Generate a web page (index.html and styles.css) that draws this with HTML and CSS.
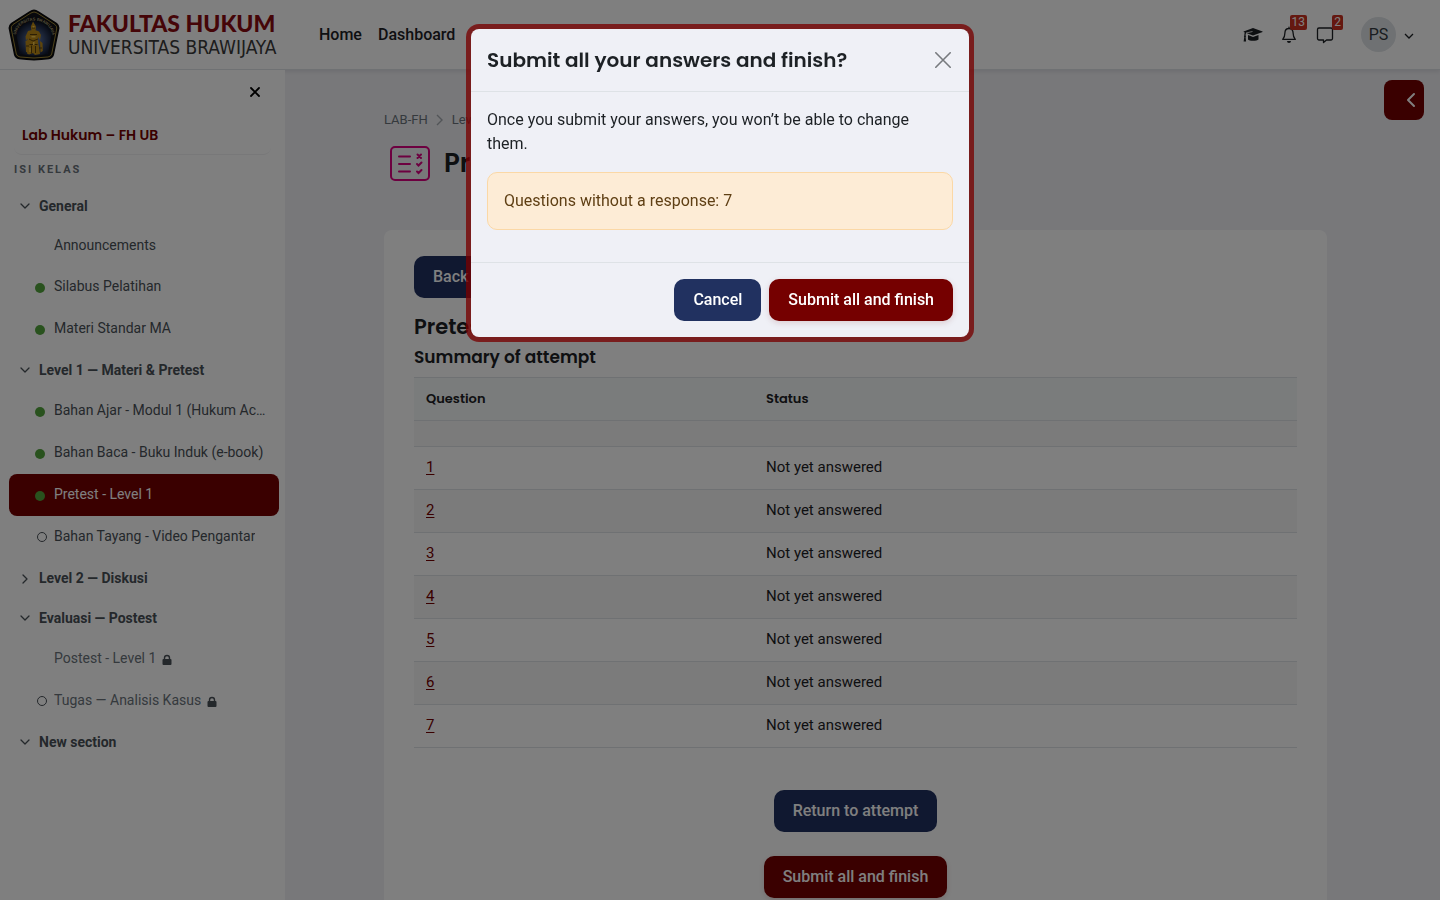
FILE: index.html
```html
<!DOCTYPE html>
<html lang="en">

<head>
  <meta charset="UTF-8" />
  <meta name="viewport" content="width=device-width, initial-scale=1" />
  <title>Pretest - Level 1: Summary of attempt</title>
  <link rel="stylesheet" href="styles.css">
</head>

<body>
  <!-- icons used more than once -->
  <svg class="sprite" aria-hidden="true">
    <symbol id="chevron-down" viewBox="0 0 12 12">
      <path d="M2 4l4 4 4-4" fill="none" stroke="currentColor" stroke-width="1.3" stroke-linecap="round" stroke-linejoin="round" />
    </symbol>
    <symbol id="chevron-right" viewBox="0 0 12 12">
      <path d="M4 3l4 4-4 4" fill="none" stroke="currentColor" stroke-width="1.3" stroke-linecap="round" stroke-linejoin="round" />
    </symbol>
    <symbol id="lock" viewBox="0 0 10 12">
      <path d="M1.800 5V4a3.200 3.200 0 0 1 6.400 0v1h.3a1 1 0 0 1 1 1v4a1 1 0 0 1-1 1h-7a1 1 0 0 1-1-1V6a1 1 0 0 1 1-1zm1.400 0h3.600V4a1.800 1.800 0 0 0-3.600 0z" fill="currentColor" />
    </symbol>
  </svg>

  <header class="navbar">
    <a class="brand" href="#">
      <svg class="emblem" viewBox="0 0 52 52" aria-hidden="true">
        <defs>
          <radialGradient id="glow" cx="50%" cy="55%" r="52%">
            <stop offset="0" stop-color="#6a88c4" />
            <stop offset="1" stop-color="#10182c" />
          </radialGradient>
        </defs>
        <path d="M26 .5Q28 .5 31 2.500L49 14Q52 16.500 51.300 20L46 46Q45 49.500 41 50.300Q26 52.500 11 50.300Q7 49.500 6 46L.7 20Q0 16.500 3 14L21 2.500Q24 .5 26 .5z" fill="#0a0a0c" />
        <path d="M26 3Q28 3.300 30 4.500L47 15.500Q49.300 17.500 48.700 20L43.700 45Q43 47.500 40 48Q26 50 12 48Q9 47.500 8.300 45L3.300 20Q2.700 17.500 5 15.500L22 4.500Q24 3.300 26 3z" fill="#101318" stroke="#b0953a" stroke-width=".9" />
        <path d="M26 12Q37 13 44 23L40 45Q26 48.500 12 45L8 23Q15 13 26 12z" fill="url(#glow)" />
        <path id="arc" d="M7.500 27Q10 12.500 26 11.500Q42 12.500 44.500 27" fill="none" />
        <text class="emblem-text"><textPath href="#arc" startOffset="1">UNIVERSITAS BRAWIJAYA</textPath></text>
        <g fill="#bd8a16">
          <path d="M25 12.500l1.500 2.500 1.500 2.500-.5 4h-4l-.7-4 1.200-2.500z" />
          <path d="M20 22l4-1h3l4 1.500 2 3.500-1 5-2-3v5l1 5 1 7-5 1-2-2-4 1.500-2-1 1-8-.500-7-1.500 2-.500-4z" />
          <path d="M17.500 32l2.500-1 .5 3-.5 9.500-2-.5zM32 32l2.500 2 .3 8-2.300 1.500z" />
        </g>
        <path d="M22 25.500h7M21 30l4 2 5-2M21.500 35.500h8M23.500 36.500v8M27.500 37v7M18 37h3M31 39h3M24 19h3" fill="none" stroke="#4d360a" stroke-width=".9" />
        <path d="M24.500 17h2v1.500h-2zM23.500 27h4v1.500h-4zM25 33h1.500v3H25zM21.500 39h1v4h-1z" fill="#f0c550" />
      </svg>
      <span class="brand-text">
        <span class="brand-faculty">FAKULTAS HUKUM</span>
        <span class="brand-univ">UNIVERSITAS BRAWIJAYA</span>
      </span>
    </a>
    <nav class="main-nav" aria-label="Main">
      <a href="#">Home</a>
      <a href="#">Dashboard</a>
    </nav>
    <div class="user-tools">
      <button class="tool" type="button" aria-label="Courses">
        <svg width="20" height="16" viewBox="0 0 20 16" aria-hidden="true">
          <path d="M10 1L.6 4.500v.6l1.200.5C1.300 6.500 1.300 7.500 1.400 8.500.8 8.800.8 9.700 1.300 10L.6 14.500h2.500L2.600 10c.5-.3.500-1.200 0-1.500 0-1 .1-1.800.6-2.400L10 8.600l9.600-3.500v-.6zM5 8v4.500c1 1.700 9 1.700 10.500 0V8L10 10z" fill="currentColor" />
          <path d="M3 6l6.500-1.500" stroke="#fff" stroke-width=".8" />
        </svg>
      </button>
      <button class="tool" type="button" aria-label="Notifications">
        <svg width="16" height="18" viewBox="0 0 16 18" aria-hidden="true">
          <path d="M8 2.500C5.300 2.500 3.900 4.500 3.900 7c0 3.300-.7 4.800-2.200 6.400h12.600C12.800 11.800 12.100 10.300 12.100 7c0-2.500-1.400-4.500-4.100-4.500zM8 1.200v1.300" fill="none" stroke="currentColor" stroke-width="1.300" stroke-linejoin="round" stroke-linecap="round" />
          <path d="M6 15h4a2 2 0 0 1-4 0z" fill="currentColor" />
        </svg>
        <span class="badge">13</span>
      </button>
      <button class="tool" type="button" aria-label="Messages">
        <svg width="18" height="18" viewBox="0 0 18 18" aria-hidden="true">
          <path d="M3 2h12a1.500 1.500 0 0 1 1.500 1.500v9A1.500 1.500 0 0 1 15 14h-4.500L7.500 16.500V14H3a1.500 1.500 0 0 1-1.500-1.500v-9A1.500 1.500 0 0 1 3 2z" fill="none" stroke="currentColor" stroke-width="1.300" stroke-linejoin="round" />
        </svg>
        <span class="badge">2</span>
      </button>
      <button class="user-menu" type="button" aria-label="User menu">
        <span class="avatar">PS</span>
        <svg width="12" height="12" viewBox="0 0 12 12" aria-hidden="true"><path d="M2 5l4 4 4-4" fill="none" stroke="currentColor" stroke-width="1.300" /></svg>
      </button>
    </div>
  </header>

  <div class="page">
    <aside class="drawer">
      <div class="drawer-head">
        <button class="drawer-close" type="button" aria-label="Close course index">
          <svg width="12" height="12" viewBox="0 0 12 12" aria-hidden="true">
            <path d="M2 2l8 8M10 2l-8 8" stroke="currentColor" stroke-width="1.800" stroke-linecap="round" />
          </svg>
        </button>
      </div>
      <a class="course-name" href="#">Lab Hukum – FH UB</a>
      <p class="drawer-label">ISI KELAS</p>
      <nav class="index" aria-label="Course index">
        <div class="section"><button type="button" aria-label="Toggle General"><svg width="12" height="12"><use href="#chevron-down" /></svg></button><a href="#">General</a></div>
        <ul>
          <li class="plain"><a href="#"><span class="dot"></span><span class="name">Announcements</span></a></li>
          <li><a href="#"><span class="dot done"></span><span class="name">Silabus Pelatihan</span></a></li>
          <li><a href="#"><span class="dot done"></span><span class="name">Materi Standar MA</span></a></li>
        </ul>
        <div class="section"><button type="button" aria-label="Toggle Level 1"><svg width="12" height="12"><use href="#chevron-down" /></svg></button><a href="#">Level 1 — Materi &amp; Pretest</a></div>
        <ul>
          <li><a href="#"><span class="dot done"></span><span class="name">Bahan Ajar - Modul 1 (Hukum Acara)</span></a></li>
          <li><a href="#"><span class="dot done"></span><span class="name">Bahan Baca - Buku Induk (e-book)</span></a></li>
          <li class="current"><a href="#"><span class="dot done"></span><span class="name">Pretest - Level 1</span></a></li>
          <li><a href="#"><span class="dot todo"></span><span class="name">Bahan Tayang - Video Pengantar</span></a></li>
        </ul>
        <div class="section"><button type="button" aria-label="Toggle Level 2"><svg width="12" height="12"><use href="#chevron-right" /></svg></button><a href="#">Level 2 — Diskusi</a></div>
        <div class="section"><button type="button" aria-label="Toggle Evaluasi"><svg width="12" height="12"><use href="#chevron-down" /></svg></button><a href="#">Evaluasi — Postest</a></div>
        <ul>
          <li class="locked"><a href="#"><span class="dot"></span><span class="name">Postest - Level 1</span><svg width="10" height="12"><use href="#lock" /></svg></a></li>
          <li class="locked"><a href="#"><span class="dot todo"></span><span class="name">Tugas — Analisis Kasus</span><svg width="10" height="12"><use href="#lock" /></svg></a></li>
        </ul>
        <div class="section"><button type="button" aria-label="Toggle New section"><svg width="12" height="12"><use href="#chevron-down" /></svg></button><a href="#">New section</a></div>
      </nav>
    </aside>

    <main class="content">
      <nav class="breadcrumb" aria-label="Breadcrumb">
        <a href="#">LAB-FH</a>
        <svg width="8" height="12" viewBox="0 0 8 12" aria-hidden="true"><path d="M1 1l5 5-5 5" fill="none" stroke="#a5abb1" stroke-width="1.400" /></svg>
        <a href="#">Level 1</a>
      </nav>
      <div class="page-title">
        <svg width="40" height="36" viewBox="0 0 40 36" aria-hidden="true">
          <g fill="none" stroke="#da0080" stroke-width="2" stroke-linecap="round">
            <rect x="1" y="2" width="38" height="33" rx="4" />
            <path d="M9 11.500h11M9 19h11M9 26.500h11" />
            <path d="M27.500 9.500l3.500 3.500M31 9.500L27.500 13M27 19l1.500 1.500 3-3M27 26.500l1.500 1.500 3-3" />
          </g>
        </svg>
        <h1>Pretest - Level 1</h1>
      </div>

      <section class="card">
        <button class="btn btn-navy" type="button">Back</button>
        <h2>Pretest - Level 1</h2>
        <h3>Summary of attempt</h3>
        <table class="summary">
          <thead>
            <tr><th scope="col">Question</th><th scope="col">Status</th></tr>
          </thead>
          <tbody>
            <tr class="blank"><td colspan="2"></td></tr>
            <tr><td><a href="#">1</a></td><td>Not yet answered</td></tr>
            <tr><td><a href="#">2</a></td><td>Not yet answered</td></tr>
            <tr><td><a href="#">3</a></td><td>Not yet answered</td></tr>
            <tr><td><a href="#">4</a></td><td>Not yet answered</td></tr>
            <tr><td><a href="#">5</a></td><td>Not yet answered</td></tr>
            <tr><td><a href="#">6</a></td><td>Not yet answered</td></tr>
            <tr><td><a href="#">7</a></td><td>Not yet answered</td></tr>
          </tbody>
        </table>
        <div class="controls">
          <button class="btn btn-navy" type="button">Return to attempt</button>
          <button class="btn btn-red" type="button">Submit all and finish</button>
        </div>
      </section>
    </main>

    <button class="blocks-toggle" type="button" aria-label="Open block drawer">
      <svg width="10" height="16" viewBox="0 0 10 16" aria-hidden="true"><path d="M8 2L2 8l6 6" fill="none" stroke="currentColor" stroke-width="2" stroke-linecap="round" stroke-linejoin="round" /></svg>
    </button>
  </div>

  <div class="backdrop">
    <div class="modal" role="dialog" aria-modal="true" aria-labelledby="modal-title">
      <div class="modal-header">
        <h5 id="modal-title">Submit all your answers and finish?</h5>
        <button class="modal-close" type="button" aria-label="Close">
          <svg width="16" height="16" viewBox="0 0 16 16" aria-hidden="true"><path d="M.8.8l14.400 14.400M15.200.8L.8 15.200" stroke="currentColor" stroke-width="1.600" stroke-linecap="round" /></svg>
        </button>
      </div>
      <div class="modal-body">
        <p>Once you submit your answers, you won’t be able to change them.</p>
        <div class="alert">Questions without a response: 7</div>
      </div>
      <div class="modal-footer">
        <button class="btn btn-navy" type="button">Cancel</button>
        <button class="btn btn-red" type="button">Submit all and finish</button>
      </div>
    </div>
  </div>
</body>

</html>
```
FILE: styles.css
```css
* {
  box-sizing: border-box;
}

html,
body {
  height: 100%;
}

body {
  margin: 0;
  overflow: hidden;
  background: #f0f0f5;
  color: #1d2125;
  font-family: Roboto, "Noto Sans", sans-serif;
  font-size: 16px;
  line-height: 24px;
}

h1, h2, h3, h5, p, ul {
  margin: 0;
  padding: 0;
}

h1, h2, h3, h5, th, .course-name {
  font-family: Poppins, Inter, sans-serif;
  font-weight: 600;
}

a {
  color: inherit;
  text-decoration: none;
}

button {
  border: 0;
  padding: 0;
  background: none;
  color: inherit;
  font: inherit;
  cursor: pointer;
}

svg {
  display: block;
  flex: none;
}

.sprite {
  display: none;
}

/* navbar */
.navbar {
  display: flex;
  align-items: center;
  height: 70px;
  padding: 0 25px 0 8px;
  background: #fff;
  border-bottom: 1px solid #dee2e6;
  box-shadow: 0 2px 4px rgba(0, 0, 0, 0.08);
  position: relative;
}

.brand {
  display: flex;
  align-items: center;
  gap: 8px;
  width: 271px;
  white-space: nowrap;
}

.emblem {
  width: 52px;
  height: 52px;
}

.emblem-text {
  font-family: "Liberation Sans", sans-serif;
  font-size: 4px;
  font-weight: bold;
  fill: #a89c70;
}

.brand-text {
  display: flex;
  flex-direction: column;
}

.brand-faculty {
  color: #8b0a10;
  font-family: Lato, sans-serif;
  font-size: 23px;
  font-weight: 900;
  line-height: 24px;
}

.brand-univ {
  color: #3a3a3a;
  font-family: "Liberation Sans Narrow", "DejaVu Sans Condensed", sans-serif;
  font-size: 19px;
  line-height: 24px;
}

.main-nav {
  display: flex;
  gap: 16px;
  margin-left: 40px;
  font-weight: 500;
}

.user-tools {
  display: flex;
  align-items: center;
  gap: 16px;
  margin-left: auto;
}

.tool {
  position: relative;
  display: grid;
  place-items: center;
  width: 20px;
  height: 36px;
}

.badge {
  position: absolute;
  right: -8px;
  top: -2px;
  padding: 0 2px;
  border-radius: 2px;
  background: #ca3120;
  color: #fff;
  font-size: 12px;
  line-height: 15px;
}

.user-menu {
  display: flex;
  align-items: center;
  gap: 7px;
  margin-left: 10px;
}

.avatar {
  display: grid;
  place-items: center;
  width: 35px;
  height: 35px;
  border-radius: 50%;
  background: #dee2e6;
  color: #343a40;
}

/* page */
.page {
  display: flex;
  position: relative;
  height: calc(100% - 70px);
}

.drawer {
  flex: none;
  width: 285px;
  padding: 0 6px 0 9px;
  background: #fff;
  color: #495057;
  font-size: 14px;
}

.drawer-head {
  display: flex;
  justify-content: flex-end;
  height: 44px;
  padding-right: 18px;
}

.drawer-close {
  color: #000;
}

.course-name {
  display: block;
  margin: 0 8px 0 5px;
  padding: 9px 8px 7px;
  border-bottom: 1px solid #f0f0f2;
  border-radius: 8px;
  color: #750000;
  font-size: 14px;
}

.drawer-label {
  padding: 3px 5px 4px;
  color: #6a737b;
  font-size: 11px;
  font-weight: 700;
  letter-spacing: 2px;
}

.index ul {
  list-style: none;
}

.section {
  display: flex;
  align-items: center;
  gap: 8px;
  height: 40px;
  padding-left: 10px;
  font-weight: 700;
}

.index li a {
  display: flex;
  align-items: center;
  height: 42px;
  padding: 0 9px 2px 26px;
  border-radius: 8px;
}

.index .plain a {
  height: 40px;
}

.name {
  overflow: hidden;
  white-space: nowrap;
  text-overflow: ellipsis;
}

.dot {
  flex: none;
  width: 10px;
  height: 10px;
  margin: 4px 9px 0 0;
  border-radius: 50%;
}

.dot.done {
  background: #53a43c;
}

.dot.todo {
  margin: 2px 7px 0 2px;
  border: 1px solid #495057;
}

.current a {
  background: #750000;
  color: #fff;
}

.locked {
  color: #6a737b;
}

.locked svg {
  margin: 4px 0 0 6px;
  color: #495057;
}

.content {
  flex: 1;
  min-width: 0;
  padding: 38px 113px 0 99px;
}

.breadcrumb {
  display: flex;
  align-items: center;
  gap: 8px;
  color: #6a737b;
  font-size: 13px;
}

.page-title {
  display: flex;
  align-items: center;
  gap: 14px;
  height: 62px;
  padding-left: 6px;
}

h1 {
  font-size: 26px;
}

.card {
  margin-top: 36px;
  padding: 26px 30px;
  border-radius: 8px;
  background: #fff;
}

.btn {
  height: 42px;
  padding: 0 19px;
  border-radius: 10px;
  color: #fff;
  font-weight: 500;
}

.btn-navy {
  background: #213160;
}

.btn-red {
  background: #750000;
  box-shadow: 0 2px 6px rgba(117, 0, 0, 0.15);
}

h2 {
  margin-top: 14px;
  font-size: 21px;
  line-height: 30px;
}

h3 {
  font-size: 17px;
  line-height: 30px;
}

.summary {
  width: 100%;
  margin-top: 5px;
  border-collapse: collapse;
  font-size: 15px;
  line-height: 20px;
}

.summary th,
.summary td {
  height: 43px;
  padding: 0 12px 2px;
  border: solid #dee2e6;
  border-width: 1px 0;
  text-align: left;
}

.summary th {
  padding-bottom: 0;
  background: #f4f9f8;
  font-size: 13px;
}

.summary th:first-child {
  width: 340px;
}

.summary .blank td {
  height: 26px;
}

.summary tbody tr:nth-child(odd) {
  background: #f7f7f7;
}

.summary td a {
  color: #750000;
  text-decoration: underline;
  text-underline-offset: 2px;
}

.controls {
  display: flex;
  flex-direction: column;
  align-items: center;
  gap: 24px;
  margin-top: 42px;
}

.blocks-toggle {
  position: absolute;
  top: 10px;
  right: 16px;
  display: flex;
  align-items: center;
  justify-content: flex-end;
  width: 40px;
  height: 40px;
  padding-right: 8px;
  border-radius: 8px;
  background: #750000;
  color: #fff;
}

/* modal */
.backdrop {
  position: fixed;
  inset: 0;
  display: flex;
  justify-content: center;
  align-items: flex-start;
  padding-top: 29px;
  background: rgba(0, 0, 0, 0.5);
}

.modal {
  width: 498px;
  border-radius: 8px;
  background: #eff0f6;
  box-shadow: 0 0 0 5px rgba(120, 0, 0, 0.77);
}

.modal-header {
  display: flex;
  align-items: center;
  justify-content: space-between;
  height: 63px;
  padding: 0 18px 0 16px;
  border-bottom: 1px solid #dee2e6;
}

h5 {
  font-size: 20px;
}

.modal-close {
  color: #777a7e;
}

.modal-body {
  padding: 16px 16px 32px;
}

.alert {
  margin-top: 16px;
  padding: 16px;
  border: 1px solid #fbd8a6;
  border-radius: 10px;
  background: #fdecd6;
  color: #5f3f14;
}

.modal-footer {
  display: flex;
  justify-content: flex-end;
  gap: 8px;
  padding: 16px;
  border-top: 1px solid #dee2e6;
}
```
